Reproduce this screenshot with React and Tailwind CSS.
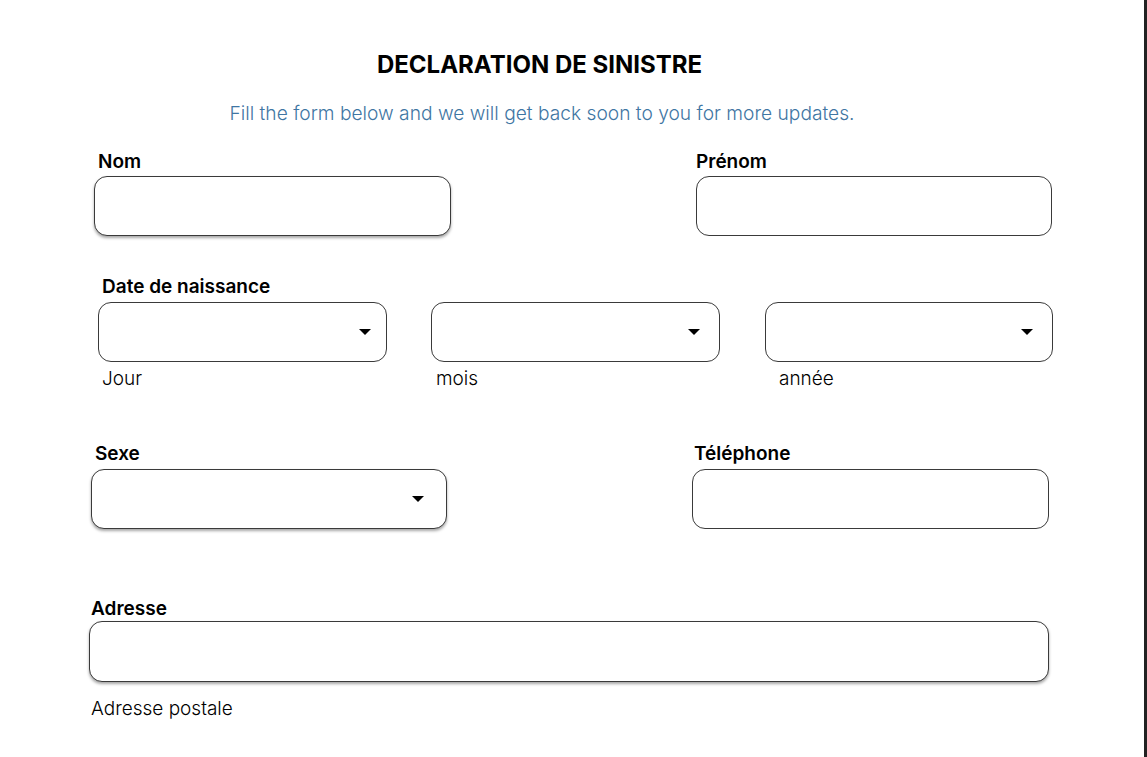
import React from "react";

function Caret() {
  return (
    <svg width="12" height="6" viewBox="0 0 12 6" className="block">
      <path d="M0 0 H12 L6 6 Z" fill="#000" />
    </svg>
  );
}

function Box({ width, shadow, select, caretRight = 17, height = "h-[60px]" }) {
  return (
    <div
      className={`${width} ${height} flex items-center justify-end rounded-[13px] border border-[#3a3a3a] bg-white ${
        shadow ? "shadow-[0_2px_3px_rgba(0,0,0,0.35)]" : ""
      }`}
      style={{ paddingRight: caretRight }}
    >
      {select && <Caret />}
    </div>
  );
}

export default function App() {
  return (
    <div
      className="relative h-[757px] w-[1147px] overflow-hidden border-r-[3px] border-[#222] bg-white text-black"
      style={{ fontFamily: "Inter, 'Noto Sans', sans-serif" }}
    >
      {/* Header */}
      <div className="w-[1079px] pt-[51px] text-center text-[24px] font-bold leading-[28px]">
        DECLARATION DE SINISTRE
      </div>
      <div className="mt-[22px] w-[1084px] text-center text-[19.2px] font-light leading-[24px] text-[#3f76a3]">
        Fill the form below and we will get back soon to you for more updates.
      </div>

      {/* Nom / Prénom */}
      <div className="mt-[26px] flex pl-[94px]">
        <div className="flex w-[357px] flex-col">
          <div className="pl-[4px] text-[19px] font-semibold leading-[22px]">Nom</div>
          <div className="mt-[3px]">
            <Box width="w-[357px]" shadow />
          </div>
        </div>
        <div className="ml-[245px] flex w-[356px] flex-col">
          <div className="text-[19px] font-semibold leading-[22px]">Prénom</div>
          <div className="mt-[3px]">
            <Box width="w-[356px]" />
          </div>
        </div>
      </div>

      {/* Date de naissance */}
      <div className="mt-[40px] pl-[98px]">
        <div className="pl-[4px] text-[19px] font-semibold leading-[22px]">Date de naissance</div>
        <div className="mt-[4px] flex">
          <div className="flex w-[289px] flex-col">
            <Box width="w-[289px]" select caretRight={15} />
            <div className="mt-[5px] pl-[4px] text-[19px] font-light leading-[24px]">Jour</div>
          </div>
          <div className="ml-[44px] flex w-[289px] flex-col">
            <Box width="w-[289px]" select caretRight={19} />
            <div className="mt-[5px] pl-[5px] text-[19px] font-light leading-[24px]">mois</div>
          </div>
          <div className="ml-[45px] flex w-[288px] flex-col">
            <Box width="w-[288px]" select caretRight={19} />
            <div className="mt-[5px] pl-[14px] text-[19px] font-light leading-[24px]">année</div>
          </div>
        </div>
      </div>

      {/* Sexe / Téléphone */}
      <div className="mt-[52px] flex pl-[91px]">
        <div className="flex w-[356px] flex-col">
          <div className="pl-[4px] text-[19px] font-semibold leading-[22px]">Sexe</div>
          <div className="mt-[4px]">
            <Box width="w-[356px]" shadow select caretRight={22} />
          </div>
        </div>
        <div className="ml-[245px] flex w-[357px] flex-col">
          <div className="pl-[2px] text-[19px] font-semibold leading-[22px]">Téléphone</div>
          <div className="mt-[4px]">
            <Box width="w-[357px]" />
          </div>
        </div>
      </div>

      {/* Adresse */}
      <div className="mt-[69px] pl-[89px]">
        <div className="pl-[2px] text-[19px] font-semibold leading-[22px]">Adresse</div>
        <div className="mt-[1px]">
          <Box width="w-[960px]" height="h-[61px]" shadow />
        </div>
        <div className="mt-[15px] pl-[2px] text-[19px] font-light leading-[24px]">Adresse postale</div>
      </div>
    </div>
  );
}
